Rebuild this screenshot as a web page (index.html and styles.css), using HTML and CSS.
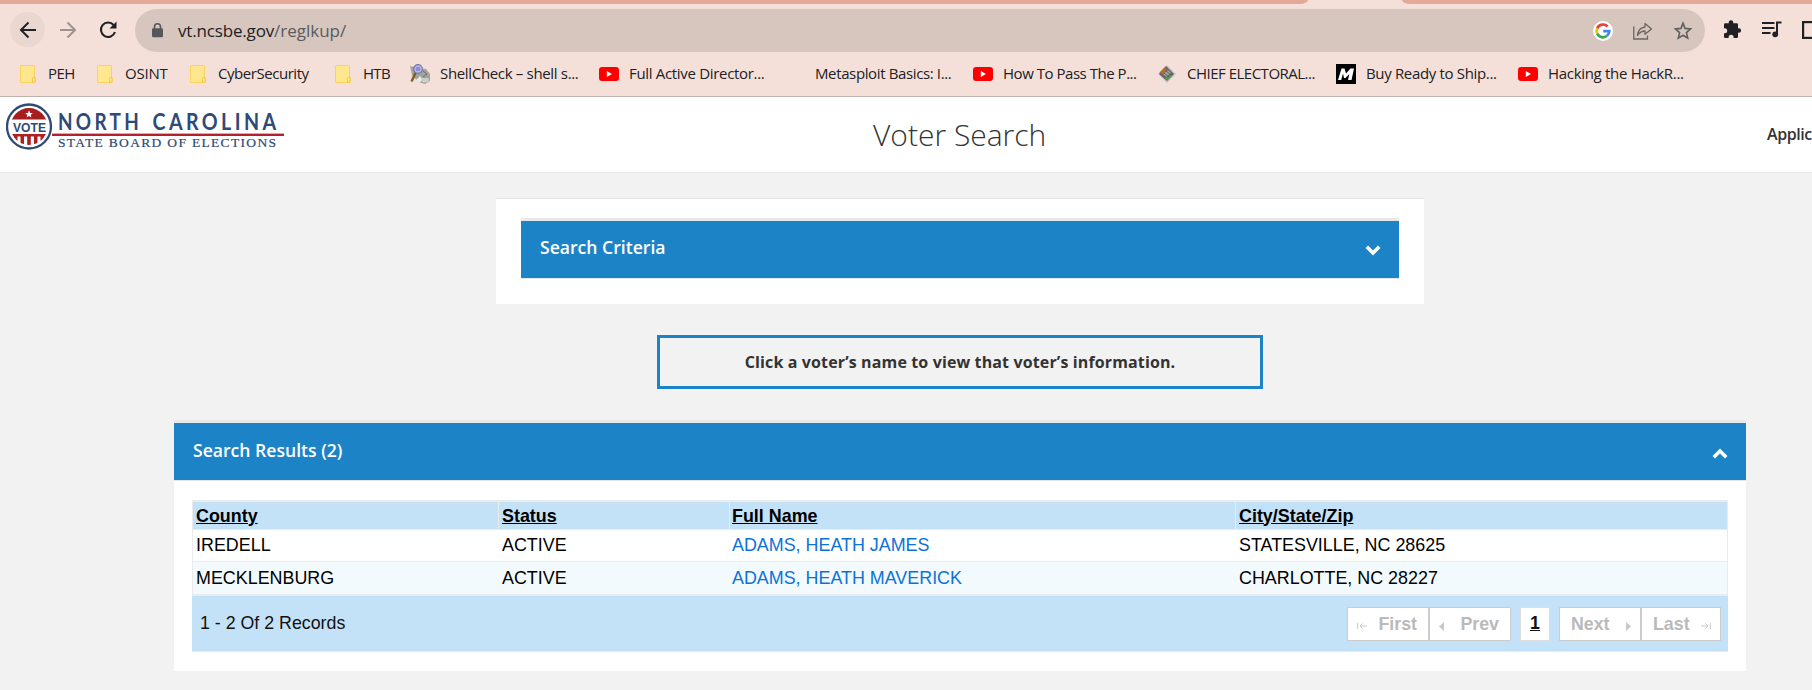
FILE: index.html
```html
<!DOCTYPE html>
<html lang="en">
<head>
<meta charset="utf-8">
<title>Voter Search</title>
<link rel="stylesheet" href="styles.css">
</head>
<body>
<svg width="0" height="0" class="defs">
  <defs>
    <symbol id="folder" viewBox="0 0 16 18">
      <path d="M1 .5h13q.5 0 .5.5v11l1 1v3.500q0 1-1 1H1q-.5 0-.5-.5V1Q.5.5 1 .5z" fill="#ffe78f" stroke="#fbd35c"/>
      <path d="M12.500 17v-3.500q0-1 1-1h1.500v3.500q0 1.500-2.500 1.500z" fill="#ffe78f" stroke="#f7c843"/>
    </symbol>
    <symbol id="youtube" viewBox="0 0 20 14">
      <rect width="20" height="14" rx="3" fill="#f00"/>
      <path d="M7.800 4l5.200 3-5.200 3z" fill="#fff"/>
    </symbol>
  </defs>
</svg>

<div class="browser">
  <div class="tabstrip"><div class="tabs-left"></div><div class="tabs-right"></div></div>
  <div class="toolbar">
    <div class="nav nav-back"><svg width="18" height="18" viewBox="0 0 18 18"><path d="M17 9H2M9.500 1.500L2 9l7.500 7.500" fill="none" stroke="#202124" stroke-width="2"/></svg></div>
    <div class="nav"><svg width="18" height="18" viewBox="0 0 18 18"><path d="M1 9h15M8.500 1.500L16 9l-7.500 7.500" fill="none" stroke="#9d9390" stroke-width="2"/></svg></div>
    <div class="nav"><svg width="18" height="18" viewBox="0 0 18 18"><path d="M14.600 4A7.200 7.200 0 1 0 16 11" fill="none" stroke="#202124" stroke-width="2.100"/><path d="M17.500.5v7H10.500z" fill="#202124"/></svg></div>
    <div class="omnibox">
      <svg class="lock" width="11" height="15" viewBox="0 0 11 15"><path d="M2.500 6V3.800a3 3 0 0 1 6 0V6" fill="none" stroke="#54575b" stroke-width="1.600"/><rect y="5.200" width="11" height="9" rx="1.200" fill="#54575b"/></svg>
      <div class="url"><span class="host">vt.ncsbe.gov</span><span class="path">/reglkup/</span></div>
      <div class="omni-actions">
        <svg width="20" height="20" viewBox="0 0 20 20"><circle cx="10" cy="10" r="10" fill="#fff"/><g fill="none" stroke-width="2.700"><path d="M4.200 7.400A6.300 6.300 0 0 1 14.600 5.500" stroke="#ea4335"/><path d="M4.200 12.600A6.300 6.300 0 0 1 4.200 7.400" stroke="#fbbc05"/><path d="M14 14.800A6.300 6.300 0 0 1 4.200 12.600" stroke="#34a853"/><path d="M10.200 10.200H16.300Q16.200 13 14 14.800" stroke="#4285f4"/></g></svg>
        <svg width="20" height="18" viewBox="0 0 20 18"><g fill="none" stroke="#6b6563" stroke-width="1.300"><path d="M.8 4.500V17h13.700v-3.500"/><path d="M4.500 13.500C5 8.500 8 5.500 12 5V1.500L18.500 7 12 12.300V9Q7.500 9 4.500 13.500z" stroke-linejoin="round"/></g></svg>
        <svg width="20" height="20" viewBox="0 0 20 20"><path d="M10 2.200l2 5.200 5.600.5-4.200 3.700 1.300 5.500L10 14.200l-4.700 2.900 1.300-5.500-4.200-3.700 5.600-.5z" fill="none" stroke="#5f5f60" stroke-width="1.600"/></svg>
      </div>
    </div>
    <div class="ext-actions">
      <svg width="19" height="19" viewBox="0 0 19 19"><path d="M1 4.500Q1 3.300 2.200 3.300H5.700V2.600a2.300 2.300 0 0 1 4.600 0v.7h3.500Q15 3.300 15 4.500V8.200h.8a2.300 2.300 0 0 1 0 4.600H15v4Q15 18 13.800 18H10.600v-.8a2.500 2.500 0 0 0-5 0V18H2.200Q1 18 1 16.800v-3.500h.7a2.500 2.500 0 0 0 0-5H1z" fill="#202124"/></svg>
      <svg width="20" height="17" viewBox="0 0 20 17"><path d="M0 2h12.500M0 7h12.500M0 12h8.500" stroke="#202124" stroke-width="2"/><path d="M15 13V1.500h4.500" fill="none" stroke="#202124" stroke-width="2"/><circle cx="13.200" cy="13.300" r="2.900" fill="#202124"/></svg>
      <svg width="18" height="18" viewBox="0 0 18 18"><rect x="1.100" y="1.100" width="15.800" height="15.800" fill="none" stroke="#202124" stroke-width="2.200"/></svg>
    </div>
  </div>
  <div class="bookmarks">
    <div class="bm bm-peh"><svg class="fold"><use href="#folder"/></svg><span>PEH</span></div>
    <div class="bm bm-osint"><svg class="fold"><use href="#folder"/></svg><span>OSINT</span></div>
    <div class="bm bm-cyber"><svg class="fold"><use href="#folder"/></svg><span>CyberSecurity</span></div>
    <div class="bm bm-htb"><svg class="fold"><use href="#folder"/></svg><span>HTB</span></div>
    <div class="bm bm-shell">
      <svg class="fav" viewBox="0 0 20 20"><path d="M0 2l7 2 9 1 4 5v7l-5 3-7-2-6-7z" fill="#a3a39d"/><path d="M13 7l4 3-4 3 5 2M8 13l4 5" stroke="#6f706e" fill="none"/><path d="M10 12l3 4-4 3-3-3z" fill="#e9e9e5"/><ellipse cx="15" cy="16" rx="4" ry="2.500" fill="#cbcfc9"/><path d="M5.500 9L1.500 17.500" stroke="#7b5b22" stroke-width="2.400"/><circle cx="8" cy="5" r="4.300" fill="#b6b6ee" stroke="#77779d" stroke-width="1.200"/><path d="M6 4h4M6 6h4" stroke="#6666b8"/></svg>
      <span>ShellCheck – shell s...</span></div>
    <div class="bm bm-full"><svg class="yt"><use href="#youtube"/></svg><span>Full Active Director...</span></div>
    <div class="bm bm-meta"><span class="blank"></span><span>Metasploit Basics: I...</span></div>
    <div class="bm bm-how"><svg class="yt"><use href="#youtube"/></svg><span>How To Pass The P...</span></div>
    <div class="bm bm-chief">
      <svg class="fav" viewBox="0 0 20 20"><path d="M10 1l9 9-9 9-9-9z" fill="#c7c4d4"/><path d="M9 2l8 8-7 7-8-7z" fill="#65645e"/><path d="M7.500 3.500l3 2-5.500 5-2.500-2z" fill="#b46b35"/><path d="M6 10l5-4 3 3-5 4z" fill="#a5a5a0"/><path d="M8 14.500l6-4 1 1.500-5 4z" fill="#49a83d"/><path d="M7 9l5 4M9 7l5 4" stroke="#4e4e4e" stroke-width=".8"/></svg>
      <span>CHIEF ELECTORAL...</span></div>
    <div class="bm bm-buy">
      <svg class="fav" viewBox="0 0 20 20"><rect width="20" height="20"/><path d="M2 16L5.500 4.500H8.500L10 9.500 14.500 4.500H18L15.500 16H12L13.300 10 9.500 14H8L7 9.500 5.200 16z" fill="#fff"/></svg>
      <span>Buy Ready to Ship...</span></div>
    <div class="bm bm-hack"><svg class="yt"><use href="#youtube"/></svg><span>Hacking the HackR...</span></div>
  </div>
</div>

<header class="site-header">
  <svg class="logo" width="280" height="50" viewBox="0 0 280 50">
    <defs><clipPath id="seal"><circle cx="23" cy="24.500" r="18.500"/></clipPath></defs>
    <circle cx="23" cy="24.500" r="22" fill="#fff" stroke="#2e4a76" stroke-width="2.300"/>
    <g clip-path="url(#seal)">
      <path d="M0 0h46v17.500H0z" fill="#a81e1e"/>
      <path d="M0 32h46v2.500H0zM8 32h3.500v14H8zM14.500 32h3.500v14h-3.500zM21.200 32h3.600v14h-3.600zM28 32h3.500v14H28zM34.500 32H38v14h-3.500z" fill="#b02020"/>
    </g>
    <path d="M23 8.300l1.100 2.600 2.700.2-2.100 1.800.7 2.700-2.400-1.500-2.400 1.500.7-2.700-2.100-1.800 2.700-.2z" fill="#fff"/>
    <text x="7" y="29.800" class="logo-vote" textLength="33" lengthAdjust="spacingAndGlyphs">VOTE</text>
    <text x="52" y="28" class="logo-name" textLength="84" lengthAdjust="spacingAndGlyphs">NORTH</text>
    <text x="146.500" y="28" class="logo-name" textLength="127" lengthAdjust="spacingAndGlyphs">CAROLINA</text>
    <rect x="46" y="31.600" width="232" height="2.400" fill="#b5202b"/>
    <text x="52" y="45" class="logo-sub" textLength="218">STATE BOARD OF ELECTIONS</text>
  </svg>
  <h1>Voter Search</h1>
  <div class="applic">Applic</div>
</header>

<main>
  <section class="criteria">
    <div class="bar"><h2>Search Criteria</h2><svg width="16" height="11" viewBox="0 0 16 11"><path d="M1.800 1.800L8 8l6.200-6.200" fill="none" stroke="#fff" stroke-width="3.500"/></svg></div>
  </section>
  <div class="notice">Click a voter’s name to view that voter’s information.</div>
  <section class="results">
    <div class="bar bar-results"><h2>Search Results (2)</h2><svg width="16" height="11" viewBox="0 0 16 11"><path d="M1.800 9.200L8 3l6.200 6.200" fill="none" stroke="#fff" stroke-width="3.500"/></svg></div>
    <div class="results-body">
      <table>
        <colgroup><col class="c1"><col class="c2"><col class="c3"><col class="c4"></colgroup>
        <thead><tr><th><a>County</a></th><th><a>Status</a></th><th><a>Full Name</a></th><th><a>City/State/Zip</a></th></tr></thead>
        <tbody>
          <tr><td>IREDELL</td><td>ACTIVE</td><td><a class="link">ADAMS, HEATH JAMES</a></td><td>STATESVILLE, NC 28625</td></tr>
          <tr class="alt"><td>MECKLENBURG</td><td>ACTIVE</td><td><a class="link">ADAMS, HEATH MAVERICK</a></td><td>CHARLOTTE, NC 28227</td></tr>
        </tbody>
      </table>
      <div class="pager">
        <span class="count">1 - 2 Of 2 Records</span>
        <div class="pages">
          <div class="pair">
            <span class="btn"><svg width="10" height="8" viewBox="0 0 10 8"><path d="M.7 1v6M3 4h7M5.500 1.500L3 4l2.500 2.500" fill="none" stroke="#c8c8c8"/></svg>First</span>
            <span class="btn"><svg width="5" height="9" viewBox="0 0 5 9"><path d="M5 0v9L0 4.500z" fill="#c8c8c8"/></svg>Prev</span>
          </div>
          <span class="current">1</span>
          <div class="pair">
            <span class="btn">Next<svg width="5" height="9" viewBox="0 0 5 9"><path d="M0 0v9l5-4.500z" fill="#c8c8c8"/></svg></span>
            <span class="btn last">Last<svg width="10" height="8" viewBox="0 0 10 8"><path d="M9.300 1v6M0 4h7M4.500 1.500L7 4 4.500 6.500" fill="none" stroke="#c8c8c8"/></svg></span>
          </div>
        </div>
      </div>
    </div>
  </section>
</main>
</body>
</html>
```
FILE: styles.css
```css
* { box-sizing: border-box; }
html, body { margin: 0; height: 100%; overflow: hidden; }
body { background: #f2f2f2; font-family: "Open Sans", sans-serif; color: #333; }
svg { display: block; flex: none; }
.defs { position: absolute; }

.browser { height: 97px; background: #f5e0d9; border-bottom: 1px solid #c1b1ac; }
.tabstrip { height: 4px; display: flex; justify-content: space-between; }
.tabs-left { width: 1308px; background: #e3aa97; border-bottom-right-radius: 8px 4px; }
.tabs-right { width: 410px; background: #e3aa97; border-bottom-left-radius: 8px 4px; }

.toolbar { height: 48px; padding: 5px 0 0 10px; display: flex; align-items: flex-start; }
.nav { width: 35px; height: 35px; margin: 3px 5px 0 0; border-radius: 50%; display: flex; align-items: center; justify-content: center; }
.nav-back { background: #ead7d0; }
.omnibox { width: 1570px; height: 43px; margin-left: 5px; padding: 0 12px 0 17px; border-radius: 22px; background: #d6c6be; display: flex; align-items: center; }
.url { margin-left: 15px; font-size: 17px; line-height: 24px; color: #5a5b5f; }
.host { color: #202124; letter-spacing: -.17px; }
.omni-actions { margin-left: auto; display: flex; gap: 20px; align-items: center; }
.ext-actions { display: flex; gap: 20px; margin: 11px 0 0 18px; width: 89px; overflow: hidden; align-items: center; }

.bookmarks { height: 43px; padding-left: 20px; display: flex; align-items: center; font-size: 15px; line-height: 20px; color: #202124; white-space: nowrap; }
.bm { display: flex; align-items: center; gap: 10px; flex: none; }
.bm span { margin-top: -1px; }
.fold { width: 16px; height: 18px; margin-right: 2px; }
.fav { width: 20px; height: 20px; }
.yt { width: 20px; height: 14px; }
.blank { width: 20px; }
.bm-peh { width: 77px; letter-spacing: -.6px; }
.bm-osint { width: 93px; letter-spacing: -.2px; }
.bm-cyber { width: 145px; letter-spacing: -.45px; }
.bm-htb { width: 75px; letter-spacing: -.7px; }
.bm-shell { width: 189px; letter-spacing: -.33px; }
.bm-full { width: 186px; letter-spacing: -.32px; }
.bm-meta { width: 188px; letter-spacing: -.37px; }
.bm-how { width: 184px; letter-spacing: -.47px; }
.bm-chief { width: 179px; letter-spacing: -.5px; }
.bm-buy { width: 182px; letter-spacing: -.34px; }
.bm-hack { letter-spacing: -.31px; }

.site-header { height: 76px; background: #fff; border-bottom: 1px solid #e6e6e6; display: grid; grid-template-columns: 873px auto 1fr; }
.logo { margin: 5px 0 0 6px; }
.logo-vote { font: 700 13px "Liberation Sans", sans-serif; fill: #2e4a76; }
.logo-name { font: 700 23px Lato, sans-serif; letter-spacing: 4px; fill: #2e4a76; }
.logo-sub { font: 13.500px "Liberation Serif", serif; fill: #2e4a76; stroke: #2e4a76; stroke-width: .2px; }
.site-header h1 { margin: 17px 0 0; font-weight: 300; font-size: 30px; line-height: 41px; }
.applic { justify-self: end; width: 45px; margin-top: 26px; font-weight: 600; font-size: 16px; line-height: 22px; letter-spacing: -.45px; }

main { display: flex; flex-direction: column; align-items: center; padding-left: 108px; }
.criteria { width: 928px; height: 106px; margin-top: 25px; background: #fff; border-top: 1px solid #e6e6e6; padding: 19px 25px 0; }
.bar { height: 61px; background: #1c83c6; border-top: 3px solid #e6e8ea; border-bottom: 1px solid #e6e6e6; padding: 14px 18px 0 19px; display: flex; justify-content: space-between; }
.bar h2 { margin: 0; font-weight: 600; font-size: 17.6px; line-height: 24px; color: #fff; }
.bar svg { margin-top: 10px; }
.bar-results { padding-top: 15px; }
.notice { width: 606px; height: 54px; margin-top: 31px; border: 3px solid #1c83c6; font-weight: 700; font-size: 16px; line-height: 48px; letter-spacing: .13px; text-align: center; }
.results { width: 1572px; margin-top: 31px; background: #fff; }
.results-body { padding: 19px 18px 19px; }

table { width: 1536px; table-layout: fixed; border-collapse: separate; border-spacing: 0; border-top: 2px solid #ebebeb; border-left: 1px solid #ebebeb; border-bottom: 1px solid #ebebeb; font: 17.9px/20px "Liberation Sans", sans-serif; color: #000; }
.c1 { width: 306px; }
.c2 { width: 231px; }
.c3 { width: 506px; }
th, td { padding: 0 0 0 3px; text-align: left; border-bottom: 1px solid #ebebeb; }
th:nth-child(3), td:nth-child(3) { padding-left: 2px; }
th { height: 28px; background: #c4e2f7; border-right: 1px solid #ebebeb; }
th a { text-decoration: underline; }
td { height: 32px; padding-bottom: 2px; }
.alt td { height: 33px; background: #f2fafd; padding-bottom: 1px; }
td:last-child { border-right: 1px solid #ebebeb; }
.link { color: #0d72d8; }

.pager { height: 56px; background: #c4e2f7; border-bottom: 1px solid #ebebeb; display: flex; justify-content: space-between; padding: 11px 7px 0 8px; font: 17.8px/32px "Liberation Sans", sans-serif; color: #111; }
.pages { display: flex; font-weight: 700; }
.pair { display: flex; }
.btn { width: 82px; height: 34px; padding: 0 11px 0 9px; background: #fff; border: 1px solid #ccc; color: #bababa; display: flex; align-items: center; justify-content: space-between; line-height: 30px; }
.btn svg { margin-top: 4px; }
.pair:last-child .btn { padding: 0 9px 0 11px; }
.pair .last { width: 80px; }
.current { width: 30px; height: 34px; margin: 0 9px; background: #fff; border: 1px solid #ddd; text-align: center; text-decoration: underline; line-height: 30px; }
```
